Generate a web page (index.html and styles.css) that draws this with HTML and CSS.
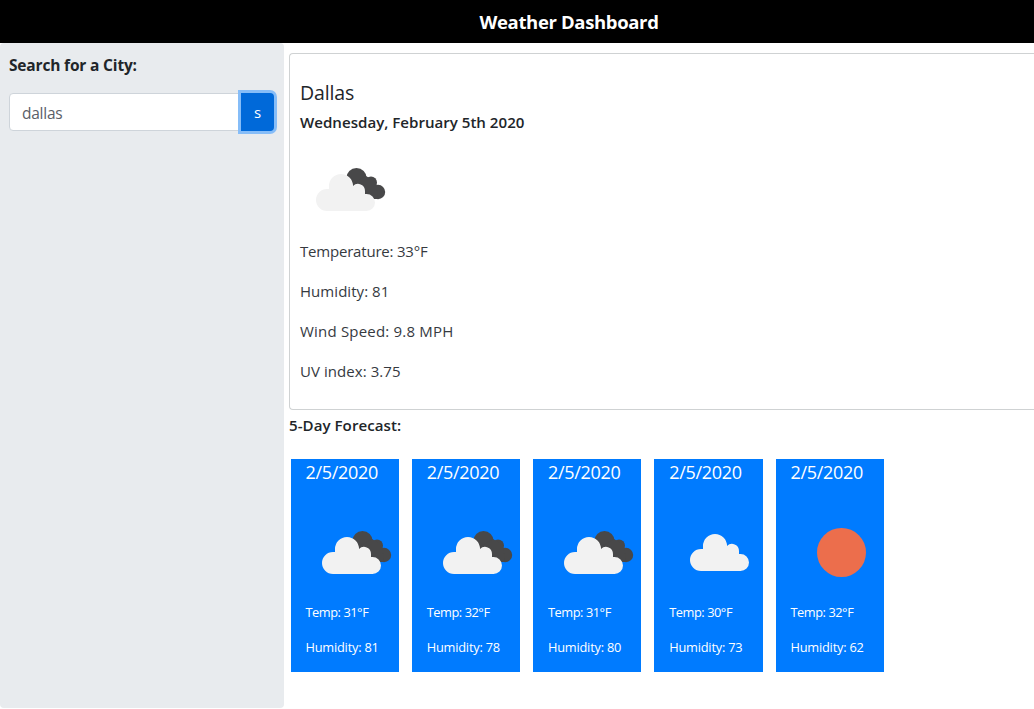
FILE: index.html
```html
<!DOCTYPE html>
<html lang="en">
<head>
<meta charset="utf-8">
<title>Weather Dashboard</title>
<link rel="stylesheet" href="styles.css">
</head>
<body>
<svg class="defs" aria-hidden="true">
  <symbol id="cloud" viewBox="0 0 59 37">
    <path d="M11 37A11 11 0 0 1 11 15L13 15V12A12 12 0 0 1 37 12A7 7 0 0 1 49 17V20H50.5A8.5 8.5 0 0 1 50.5 37Z" fill="#f2f2f2"/>
  </symbol>
  <symbol id="broken" viewBox="0 0 100 100">
    <g fill="#484849"><circle cx="56.5" cy="38.2" r="10.2"/><circle cx="71" cy="42.5" r="6"/><circle cx="78" cy="52" r="7.2"/><path d="M52 44L66 36L76 42L78 59H65Z"/></g>
    <use href="#cloud" x="16" y="34" width="59" height="37"/>
  </symbol>
  <symbol id="single" viewBox="0 0 100 100"><use href="#cloud" x="20" y="31" width="59" height="37"/></symbol>
  <symbol id="sun" viewBox="0 0 100 100"><circle cx="50.5" cy="49.5" r="24.5" fill="#ec6e4c"/></symbol>
</svg>
<header class="header"><h1 class="title">Weather Dashboard</h1></header>
<div class="layout">
  <aside class="sidebar">
    <h2 class="label">Search for a City:</h2>
    <div class="search"><input class="field" type="text" value="dallas"><button class="go">s</button></div>
  </aside>
  <main class="main">
    <section class="current">
      <h2 class="city">Dallas</h2>
      <h3 class="date">Wednesday, February 5th 2020</h3>
      <svg class="icon"><use href="#broken"/></svg>
      <p class="temp">Temperature: 33°F</p>
      <p class="hum">Humidity: 81</p>
      <p class="wind">Wind Speed: 9.8 MPH</p>
      <p class="uv">UV index: 3.75</p>
    </section>
    <h3 class="heading">5-Day Forecast:</h3>
    <section class="forecast">
      <article class="day"><h4>2/5/2020</h4><svg class="icon"><use href="#broken"/></svg><p class="day-temp">Temp: 31°F</p><p>Humidity: 81</p></article>
      <article class="day"><h4>2/5/2020</h4><svg class="icon"><use href="#broken"/></svg><p class="day-temp">Temp: 32°F</p><p>Humidity: 78</p></article>
      <article class="day"><h4>2/5/2020</h4><svg class="icon"><use href="#broken"/></svg><p class="day-temp">Temp: 31°F</p><p>Humidity: 80</p></article>
      <article class="day"><h4>2/5/2020</h4><svg class="icon"><use href="#single"/></svg><p class="day-temp">Temp: 30°F</p><p>Humidity: 73</p></article>
      <article class="day"><h4>2/5/2020</h4><svg class="icon"><use href="#sun"/></svg><p class="day-temp">Temp: 32°F</p><p>Humidity: 62</p></article>
    </section>
  </main>
</div>
</body>
</html>
```
FILE: styles.css
```css
* { box-sizing: border-box; }
body { margin: 0; height: 709px; overflow: hidden; background: #fff; color: #212529; font: 400 16px/24px "Open Sans", "Noto Sans", sans-serif; }
h1, h2, h3, h4, p { margin: 0; white-space: nowrap; }
.defs { display: none; }
.header { height: 43px; padding-left: 104px; background: #000; color: #fff; }
.title { font-size: 18.5px; font-weight: 700; line-height: 44px; text-align: center; letter-spacing: -0.35px; }
.layout { display: flex; }
.sidebar { width: 284px; height: 665px; padding: 10px 9px; background: #e8ebee; border-radius: 4px; flex: none; }
.label { font-size: 15.5px; font-weight: 700; letter-spacing: -0.17px; line-height: 24px; }
.search { display: flex; margin-top: 16px; height: 38px; }
.field { width: 232px; padding: 2px 12px 0; border: 1px solid #ced4da; border-radius: 4px 0 0 4px; background: #fff; color: #5a6068; font: 400 15.5px "Open Sans", sans-serif; letter-spacing: -0.25px; }
.go { width: 33px; padding: 0; border: 0; border-radius: 0 4px 4px 0; background: #0069d9; color: #fff; font: 400 15px "Open Sans", sans-serif; box-shadow: 0 0 0 3px #86bdf8; }
.main { flex: 1; min-width: 0; padding: 10px 0 0 5px; }
.current { height: 357px; padding: 27px 10px; border: 1px solid #cfd2d3; border-right: 0; border-radius: 4px 0 0 4px; }
.city { font-size: 19.5px; font-weight: 500; line-height: 24px; letter-spacing: -0.15px; }
.date { margin-top: 5px; font-size: 15.1px; font-weight: 600; line-height: 24px; }
.icon { display: block; width: 100px; height: 100px; }
.current .icon { margin-top: 6px; }
.current p { height: 24px; line-height: 22px; margin-bottom: 16px; font-size: 15px; font-weight: 400; color: #363a3f; }
.current .temp { letter-spacing: -0.2px; }
.current .hum { letter-spacing: 0.05px; }
.current .wind { letter-spacing: 0.2px; }
.current .uv { letter-spacing: 0.06px; }
.heading { margin-top: 3px; font-size: 15.1px; font-weight: 600; line-height: 24px; letter-spacing: 0.04px; }
.forecast { display: flex; gap: 13px; margin: 22px 0 0 1.6px; }
.day { flex: none; width: 108.25px; height: 213px; padding-left: 14.9px; background: #007bff; color: #fff; }
.day h4 { font-size: 18px; font-weight: 400; line-height: 27px; letter-spacing: -0.3px; }
.day .icon { margin: 17px 0 0 0.5px; }
.day p { height: 20px; line-height: 18px; margin-bottom: 15px; font-size: 12.8px; letter-spacing: -0.21px; }
.day .day-temp { letter-spacing: -0.45px; }
```
